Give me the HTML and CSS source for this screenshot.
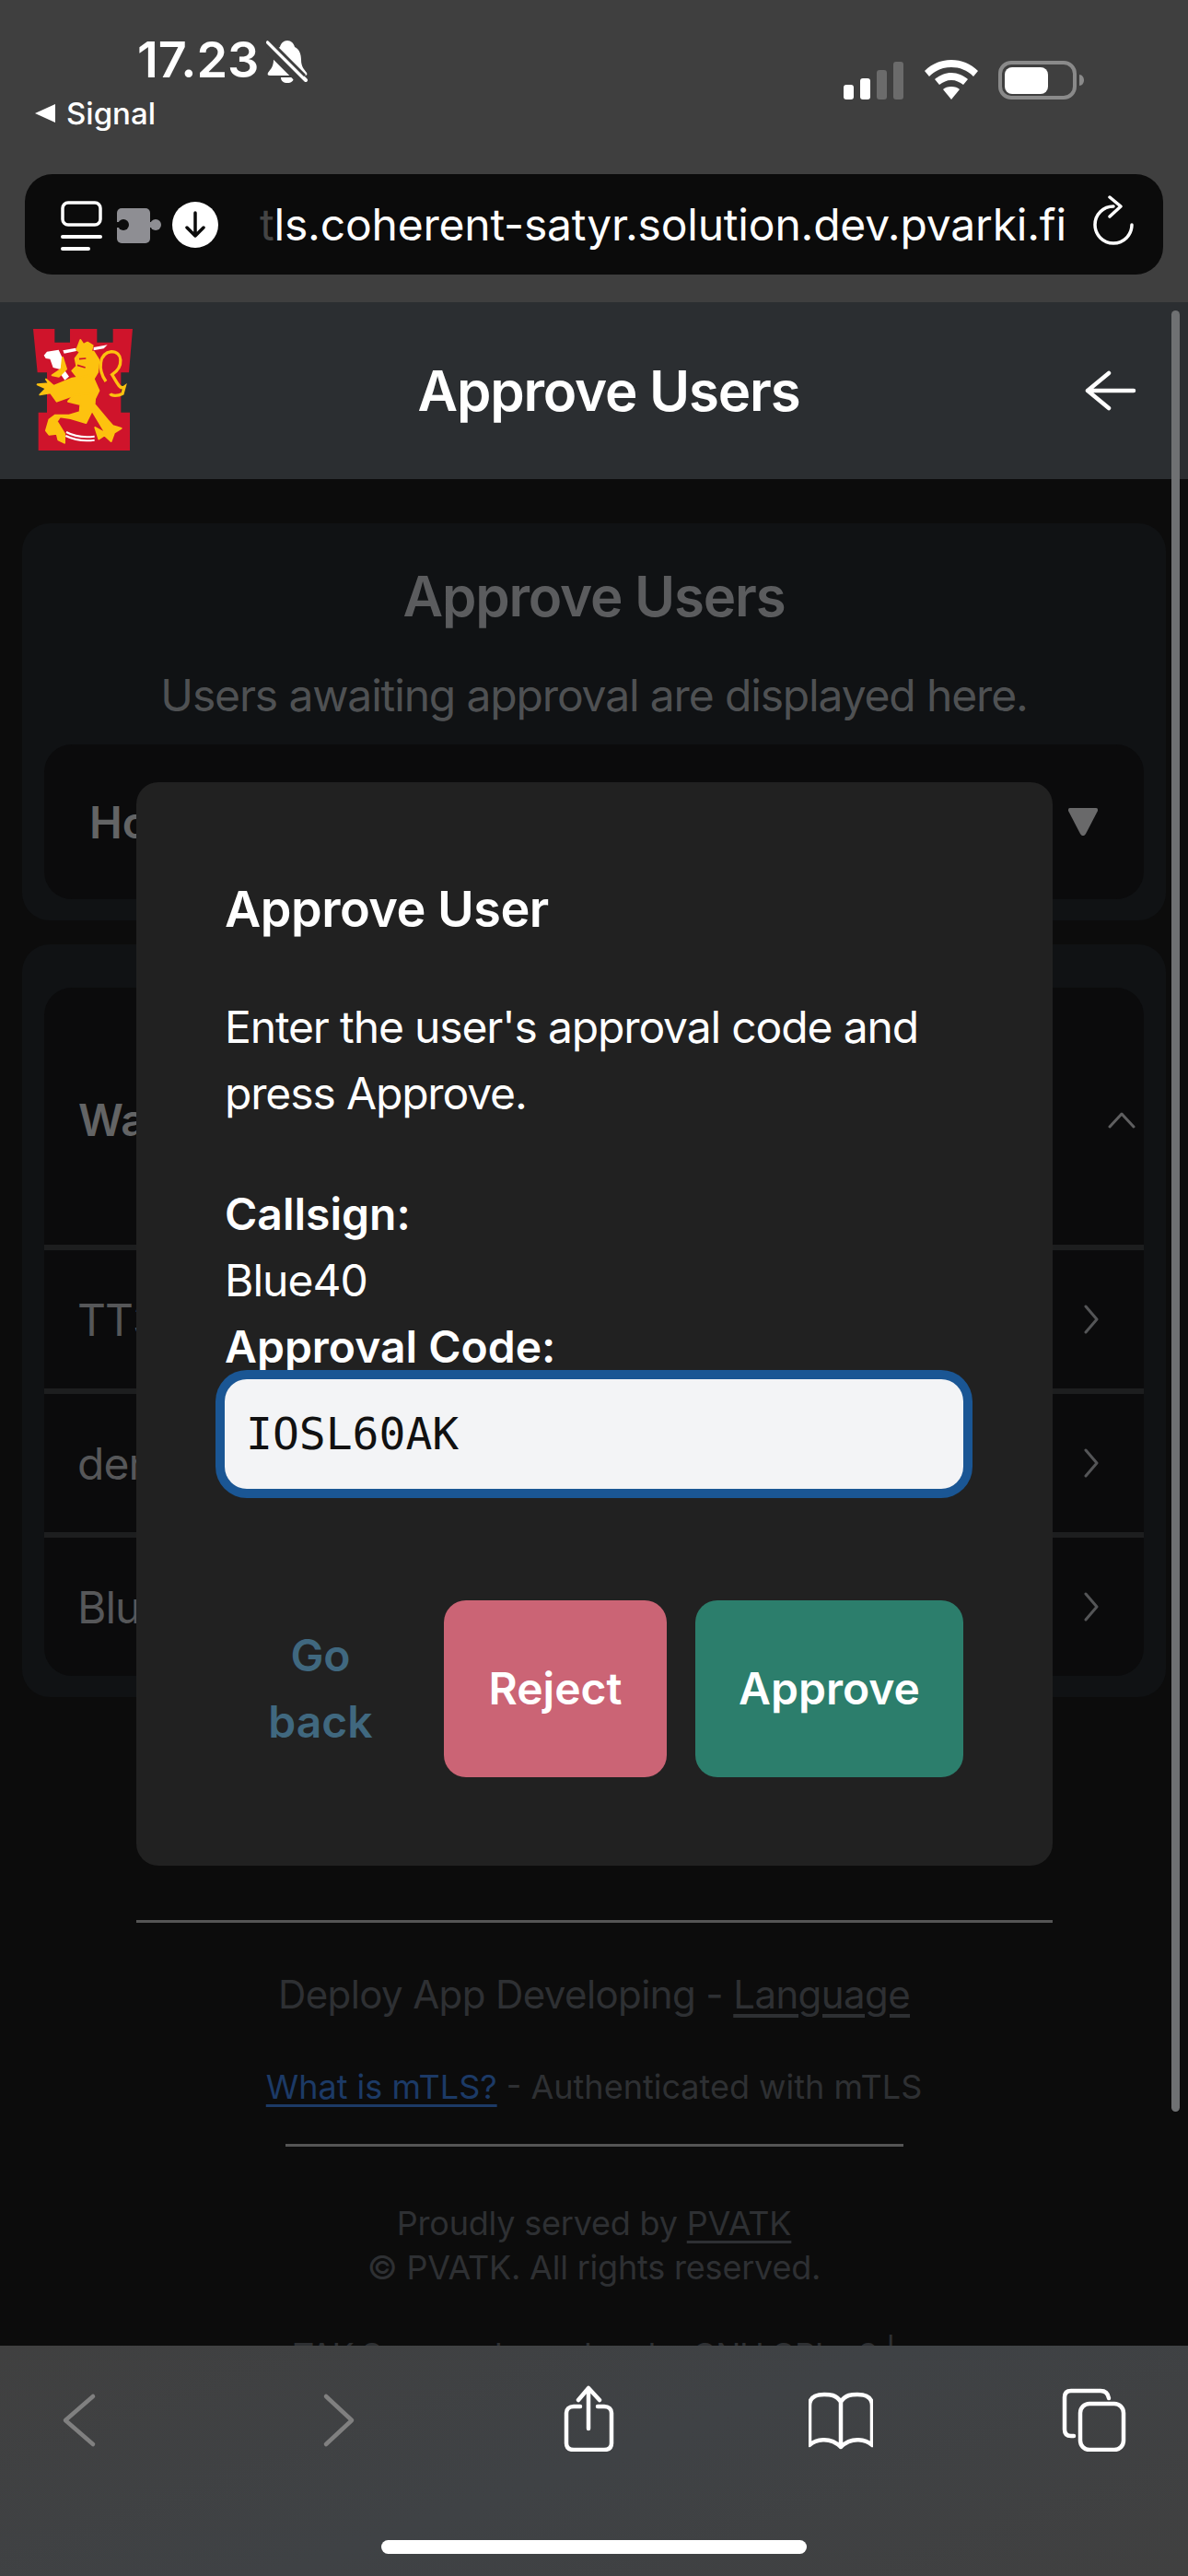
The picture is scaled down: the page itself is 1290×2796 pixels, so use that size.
FILE: index.html
```html
<!DOCTYPE html>
<html lang="en">
<head>
<meta charset="utf-8">
<title>Approve Users</title>
<link rel="stylesheet" href="styles.css">
</head>
<body>
<div class="phone">
  <div class="chrome">
    <div class="status">
      <div class="status-left">
        <div class="clock-row">
          <span class="clock">17.23</span>
          <svg class="bell" width="46" height="48" viewBox="0 0 46 48">
            <path d="M23 1c4 0 7 3 8 7 5 2 7 8 7 14 0 7 3 10 6 14 1 2 0 3-2 3H4c-2 0-3-1-2-3 3-4 6-7 6-14 0-6 2-12 7-14 1-4 4-7 8-7z" fill="#fff"/>
            <path d="M16 41h14c0 4-3 6-7 6s-7-2-7-6z" fill="#fff"/>
            <path d="M1 7l41 41" stroke="#3f3f3f" stroke-width="11"/>
            <path d="M2 3l41 41" stroke="#fff" stroke-width="4" stroke-linecap="round"/>
            <path d="M1 -2l41 41" stroke="#3f3f3f" stroke-width="3"/>
          </svg>
        </div>
        <div class="back-app">
          <svg width="22" height="20" viewBox="0 0 22 20"><path d="M22 0v20L0 10z" fill="#fff"/></svg>
          <span>Signal</span>
        </div>
      </div>
      <div class="status-right">
        <svg width="65" height="41" viewBox="0 0 65 41">
          <rect x="0" y="25" width="11" height="16" rx="3" fill="#fff"/>
          <rect x="18" y="18" width="11" height="23" rx="3" fill="#fff"/>
          <rect x="36" y="9" width="11" height="32" rx="3" fill="#6b6b6b"/>
          <rect x="54" y="0" width="11" height="41" rx="3" fill="#6b6b6b"/>
        </svg>
        <svg class="wifi" width="58" height="43" viewBox="0 0 58 43">
          <path d="M29 0c11 0 21 4 29 12l-5 6C46 11 38 8 29 8S12 11 5 18l-5-6C8 4 18 0 29 0z" fill="#fff"/>
          <path d="M29 14c7 0 13 3 18 7l-5 6c-4-3-8-5-13-5s-9 2-13 5l-5-6c5-4 11-7 18-7z" fill="#fff"/>
          <path d="M29 29c4 0 7 1 9 3L29 43 20 32c2-2 5-3 9-3z" fill="#fff"/>
        </svg>
        <svg class="battery" width="94" height="42" viewBox="0 0 94 42">
          <rect x="2" y="2" width="81" height="38" rx="12" fill="none" stroke="#8a8a8a" stroke-width="4"/>
          <rect x="7" y="7" width="47" height="29" rx="8" fill="#fff"/>
          <path d="M88 15c3 0 5 3 5 6s-2 6-5 6z" fill="#8a8a8a"/>
        </svg>
      </div>
    </div>
    <div class="urlbar">
      <svg class="url-icons" width="175" height="56" viewBox="0 0 175 56">
        <rect x="2" y="4" width="41" height="24" rx="6" fill="none" stroke="#fff" stroke-width="3.5"/>
        <rect x="0" y="39" width="45" height="4" rx="2" fill="#fff"/>
        <rect x="0" y="52" width="32" height="4" rx="2" fill="#fff"/>
        <rect x="61" y="10" width="36" height="38" rx="5" fill="#8e8e93"/>
        <rect x="95" y="25" width="6" height="6" fill="#8e8e93"/>
        <circle cx="103" cy="28" r="6" fill="#8e8e93"/>
        <rect x="59" y="25" width="7" height="6" fill="#0b0b0b"/>
        <circle cx="68" cy="28" r="6" fill="#0b0b0b"/>
        <circle cx="146" cy="28" r="25" fill="#fff"/>
        <path d="M146 15v25M137 31l9 9 9-9" fill="none" stroke="#0b0b0b" stroke-width="3.5" stroke-linecap="round" stroke-linejoin="round"/>
      </svg>
      <div class="url-text"><span class="url-fade">t</span>ls.coherent-satyr.solution.dev.pvarki.fi</div>
      <svg class="reload" width="46" height="56" viewBox="0 0 46 56">
        <path d="M24 12A20 20 0 1 0 44 32" fill="none" stroke="#fff" stroke-width="3.5" stroke-linecap="round"/>
        <path d="M20 2l12 10-12 11" fill="none" stroke="#fff" stroke-width="3.5" stroke-linecap="round" stroke-linejoin="round"/>
      </svg>
    </div>
  </div>

  <div class="viewport">
    <header class="appbar">
      <svg class="logo" width="108" height="132" viewBox="108 54 324 396">
        <path d="M108 54h70v44h50V54h88v44h52V54h64l-12 142h-26v130h29v124H125V326h28V196h-31z" fill="#cf142b"/>
        <path d="M205 124l42-8 2 10-40 8zM305 114l45-8-12 12-33 6z" fill="#fff"/>
        <path d="M143 140l10-12 38-6 14 30-8 34-24-6-10-28-14-2z" fill="#fff"/>
        <path d="M193 195l16-8 16 22-14 12z" fill="#fff"/>
        <g fill="#fdc20f" stroke="#fdc20f" stroke-width="6" stroke-linejoin="round">
          <path d="M170 205l30-20 4-38 12 38-24 24z"/>
          <path d="M245 150l17-22h43l17 27-4 40-18 30-45-10-20-25 15-15z"/>
          <path d="M250 122l12-32 10 15 13-7 17 10-7 27-33-5z"/>
          <path d="M235 215l65-10 22 50-17 35-65-20-55 20-20-28-35 6 20-20-28-13 38-3-10-14 25 22z"/>
          <path d="M240 270l70-8-2 38 42 50 18 20 27 8-23 14-10 28-22-20-18 12-12-37 35 20-45-75-20 40-50-15-35-5-10 15 25 40v30l-20-10-5-20-25 3-10-13 10-35 20-15h45l35-10 2-25-40-10z"/>
        </g>
        <path d="M345 225c-28-40-22-92 18-97 36 0 42 48 2 75 18 28 26 50 40 40l-6 22c-14 8-36 8-40 0" fill="none" stroke="#fdc20f" stroke-width="10"/>
        <path d="M216 390c26 14 60 18 92 14M214 402c28 14 64 18 94 14" fill="none" stroke="#fff" stroke-width="6"/>
        <path d="M252 172l26 8M258 152l22-2" fill="none" stroke="#cf142b" stroke-width="5"/>
      </svg>
      <h1 class="appbar-title">Approve Users</h1>
      <svg class="appbar-back" width="56" height="44" viewBox="0 0 56 44"><path d="M26 3L3 22l23 19M3 22h50" fill="none" stroke="#fff" stroke-width="4.5" stroke-linecap="round" stroke-linejoin="round"/></svg>
    </header>

    <main class="content">
      <section class="card card-intro">
        <h2 class="card-title">Approve Users</h2>
        <p class="card-desc">Users awaiting approval are displayed here.</p>
        <div class="howto">
          <span class="howto-label">How to approve</span>
          <svg width="32" height="30" viewBox="0 0 32 30"><path d="M2 0h28c2 0 2 1 2 3L19 28c-2 3-4 3-6 0L0 3c0-2 0-3 2-3z" fill="#69696a"/></svg>
        </div>
      </section>

      <section class="card card-list">
        <div class="list">
          <div class="list-head">
            <span class="list-head-label">Waiting users</span>
            <svg width="30" height="18" viewBox="0 0 30 18"><path d="M2 16L15 2l13 14" fill="none" stroke="#5f5f60" stroke-width="3" stroke-linecap="round" stroke-linejoin="round"/></svg>
          </div>
          <div class="list-row"><span>TT3</span><svg width="18" height="32" viewBox="0 0 18 32"><path d="M3 2l12 14L3 30" fill="none" stroke="#545557" stroke-width="3" stroke-linecap="round" stroke-linejoin="round"/></svg></div>
          <div class="list-row"><span>demo</span><svg width="18" height="32" viewBox="0 0 18 32"><path d="M3 2l12 14L3 30" fill="none" stroke="#545557" stroke-width="3" stroke-linecap="round" stroke-linejoin="round"/></svg></div>
          <div class="list-row"><span>Blue40</span><svg width="18" height="32" viewBox="0 0 18 32"><path d="M3 2l12 14L3 30" fill="none" stroke="#545557" stroke-width="3" stroke-linecap="round" stroke-linejoin="round"/></svg></div>
        </div>
      </section>

      <footer class="footer">
        <hr class="rule rule-wide">
        <p class="foot-line foot-deploy">Deploy App Developing - <a class="foot-link">Language</a></p>
        <p class="foot-line foot-mtls"><a class="foot-blue">What is mTLS?</a> - Authenticated with mTLS</p>
        <hr class="rule rule-narrow">
        <p class="foot-line foot-small foot-served">Proudly served by <a class="foot-link">PVATK</a></p>
        <p class="foot-line foot-small">© PVATK. All rights reserved.</p>
        <p class="foot-line foot-small foot-tak">TAK Server released under GNU GPL v3 |</p>
      </footer>
    </main>

    <div class="modal">
      <h3 class="modal-title">Approve User</h3>
      <p class="modal-text">Enter the user's approval code and press Approve.</p>
      <div class="field-label field-first">Callsign:</div>
      <div class="field-value">Blue40</div>
      <div class="field-label">Approval Code:</div>
      <div class="code-input">IOSL60AK</div>
      <div class="actions">
        <button class="btn btn-link">Go back</button>
        <button class="btn btn-reject">Reject</button>
        <button class="btn btn-approve">Approve</button>
      </div>
    </div>

    <div class="scrollbar"></div>
  </div>

  <nav class="toolbar">
    <div class="tool-row">
      <svg width="70" height="72" viewBox="0 0 70 72"><path d="M50 12L20 38l30 26" fill="none" stroke="#808080" stroke-width="4.5" stroke-linecap="round" stroke-linejoin="round"/></svg>
      <svg width="70" height="72" viewBox="0 0 70 72"><path d="M27 12l28 26-28 26" fill="none" stroke="#808080" stroke-width="4.5" stroke-linecap="round" stroke-linejoin="round"/></svg>
      <svg width="70" height="72" viewBox="0 0 70 72"><path d="M28 23h-7c-5 0-8 3-8 7v33c0 5 3 7 8 7h33c5 0 8-2 8-7V30c0-4-3-7-8-7h-7M37 47V4M26 16L37 3l12 13" fill="none" stroke="#fff" stroke-width="4.5" stroke-linecap="round" stroke-linejoin="round"/></svg>
      <svg width="70" height="72" viewBox="0 0 70 72"><path d="M35 18c-5-8-12-8-18-8-9 0-16 3-16 12v43c6-6 22-10 34 2 12-12 28-8 34-2V22c0-9-7-12-16-12-6 0-13 0-18 8zM35 18v49" fill="none" stroke="#fff" stroke-width="4.5" stroke-linecap="round" stroke-linejoin="round"/></svg>
      <svg width="70" height="72" viewBox="0 0 70 72">
        <path d="M13 55h-3c-5 0-7-3-7-7V13c0-5 3-7 7-7h32c5 0 8 2 9 8" fill="none" stroke="#fff" stroke-width="4.5" stroke-linecap="round"/>
        <rect x="20" y="20" width="47" height="50" rx="10" fill="none" stroke="#fff" stroke-width="4.5"/>
      </svg>
    </div>
    <div class="home-bar"></div>
  </nav>
</div>
</body>
</html>
```

FILE: styles.css
```css
* { box-sizing: border-box; }
html, body { margin: 0; padding: 0; }
body { width: 1290px; height: 2796px; overflow: hidden; background: #0c0c0c; font-family: Inter, "Liberation Sans", sans-serif; color: #fff; }
h1, h2, h3, p { margin: 0; }

.phone { display: flex; flex-direction: column; height: 2796px; }

/* Browser chrome, top */
.chrome { height: 328px; flex: none; background: #3f3f3f; padding: 0 27px; }
.status { height: 189px; display: flex; justify-content: space-between; align-items: flex-start; }
.status-left { padding: 38px 0 0 11px; }
.clock-row { display: flex; align-items: flex-start; padding-left: 111px; height: 60px; }
.clock { font-size: 54px; font-weight: 600; line-height: 54px; }
.bell { margin: 5px 0 0 8px; }
.back-app { display: flex; align-items: center; gap: 12px; font-size: 33px; font-weight: 500; line-height: 44px; margin-top: 3px; }
.status-right { display: flex; align-items: flex-end; padding: 65px 0 0 0; margin-right: 85px; }
.wifi { margin-left: 23px; }
.battery { margin-left: 22px; }

.urlbar { height: 109px; width: 1236px; background: #0b0b0b; border-radius: 30px; display: flex; align-items: center; padding-left: 39px; position: relative; }
.url-icons { flex: none; }
.url-text { margin-left: 41px; font-size: 48px; line-height: 60px; white-space: nowrap; letter-spacing: -0.2px; }
.url-fade { color: #444; }
.reload { position: absolute; left: 1158px; top: 23px; }

/* Page */
.viewport { flex: 1; min-height: 0; position: relative; overflow: hidden; background: #0c0c0c; }
.appbar { height: 192px; background: #2b2e31; display: flex; align-items: center; padding: 0 56px 0 36px; position: relative; }
.logo { flex: none; margin-top: -2px; }
.appbar-title { flex: 1; text-align: center; font-size: 60px; font-weight: 600; line-height: 72px; letter-spacing: -1.2px; }
.appbar-back { flex: none; }

.content { padding: 48px 24px 0; }
.card { background: #101214; border-radius: 30px; }
.card-intro { height: 431px; padding: 43px 24px 0; }
.card-title { font-size: 60px; font-weight: 600; line-height: 72px; text-align: center; color: #5b5c5e; letter-spacing: -1.2px; }
.card-desc { font-size: 48px; line-height: 72px; text-align: center; color: #4f5153; margin-top: 36px; letter-spacing: -1.15px; }
.howto { margin-top: 17px; height: 168px; background: #0b0b0c; border-radius: 30px; display: flex; align-items: center; justify-content: space-between; padding: 0 50px 0 49px; font-size: 48px; font-weight: 600; color: #636465; }
.card-list { margin-top: 26px; height: 817px; padding: 47px 24px 23px; }
.list { background: #0b0b0c; border-radius: 30px; height: 747px; overflow: hidden; }
.list-head { height: 279px; display: flex; align-items: center; justify-content: space-between; padding: 8px 9px 0 37px; font-size: 48px; font-weight: 600; color: #636465; }
.list-row { height: 156px; border-top: 6px solid #1d1e1f; display: flex; align-items: center; justify-content: space-between; padding: 0 48px 0 36px; font-size: 48px; letter-spacing: -1px; color: #565759; }

.footer { text-align: center; margin-top: 242px; color: #2e3033; }
.rule { border: 0; height: 3px; background: #555; margin: 0 auto; }
.rule-wide { width: 995px; }
.rule-narrow { width: 671px; margin-top: 38px; }
.foot-line { white-space: nowrap; }
.foot-deploy { font-size: 42px; line-height: 60px; margin-top: 48px; letter-spacing: -0.6px; }
.foot-mtls { font-size: 36px; line-height: 48px; margin-top: 46px; }
.foot-small { font-size: 36px; line-height: 48px; letter-spacing: -0.2px; }
.foot-served { margin-top: 59px; }
.foot-tak { margin-top: 47px; letter-spacing: -1.3px; }
.foot-link { text-decoration: underline; text-underline-offset: 6px; }
.foot-blue { color: #1c3a66; text-decoration: underline; text-underline-offset: 6px; }

/* Modal over the page */
.modal { position: absolute; left: 148px; top: 521px; width: 995px; height: 1176px; background: #212121; border-radius: 24px; padding: 102px 97px 0 96px; }
.modal-title { font-size: 54px; font-weight: 600; line-height: 72px; letter-spacing: -0.5px; }
.modal-text { font-size: 48px; line-height: 72px; margin-top: 56px; letter-spacing: -1.15px; }
.field-first { margin-top: 59px; }
.field-label { font-size: 48px; font-weight: 600; line-height: 72px; }
.field-value { font-size: 48px; line-height: 72px; letter-spacing: -1px; }
.code-input { position: relative; margin-top: -1px; height: 119px; background: #f3f4f6; border-radius: 24px; box-shadow: 0 0 0 10px #1a5694; color: #111; font-family: "DejaVu Sans Mono", monospace; font-size: 48px; line-height: 119px; padding-left: 23px; }
.actions { display: flex; gap: 30px; margin-top: 121px; }
.btn { border: 0; height: 192px; border-radius: 24px; font-family: inherit; font-size: 48px; font-weight: 600; line-height: 72px; color: #fff; padding: 0; }
.btn-link { width: 208px; padding: 0 24px; background: none; color: #40687f; }
.btn-reject { width: 242px; background: #cb6475; }
.btn-approve { width: 291px; margin-left: 1px; background: #2c7e6c; }

.scrollbar { position: absolute; left: 1272px; top: 9px; width: 9px; height: 1955px; background: #6f7173; border-radius: 5px; }

/* Browser chrome, bottom */
.toolbar { height: 250px; flex: none; background: linear-gradient(160deg, #404040, #3f4245 50%, #404040); display: flex; flex-direction: column; align-items: center; padding-top: 43px; }
.tool-row { display: flex; justify-content: space-between; width: 100%; padding: 0 67px 0 51px; }
.home-bar { width: 462px; height: 15px; background: #fff; border-radius: 8px; margin-top: 96px; }
```
